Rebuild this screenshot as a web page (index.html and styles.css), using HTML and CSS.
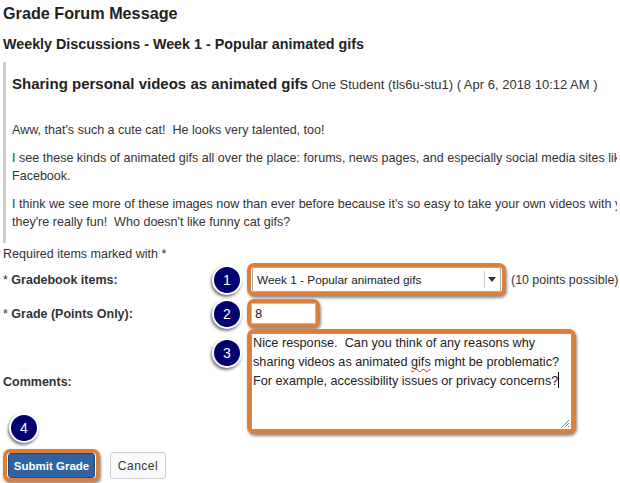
FILE: index.html
```html
<!DOCTYPE html>
<html>
<head>
<meta charset="utf-8">
<link rel="stylesheet" href="styles.css">
</head>
<body>
<h1 class="title">Grade Forum Message</h1>
<h2 class="topic">Weekly Discussions - Week 1 - Popular animated gifs</h2>
<div class="message">
  <div class="msg-head"><span class="msg-title">Sharing personal videos as animated gifs</span> <span class="msg-meta">One Student (tls6u-stu1) ( Apr 6, 2018 10:12 AM )</span></div>
  <p>Aww, that's such a cute cat!&nbsp; He looks very talented, too!</p>
  <p>I see these kinds of animated gifs all over the place: forums, news pages, and especially social media sites like<br>Facebook.</p>
  <p>I think we see more of these images now than ever before because it's so easy to take your own videos with your phone, and<br>they're really fun!&nbsp; Who doesn't like funny cat gifs?</p>
</div>
<div class="required">Required items marked with *</div>
<div class="form">
  <div class="row">
    <div class="label"><span class="star">*</span> Gradebook items:</div>
    <div class="field">
      <span class="badge">1</span>
      <div class="hl hl-select">
        <div class="select"><span class="select-text">Week 1 - Popular animated gifs</span><span class="select-arrow"></span></div>
      </div>
      <span class="possible">(10 points possible)</span>
    </div>
  </div>
  <div class="row row-grade">
    <div class="label"><span class="star">*</span> Grade (Points Only):</div>
    <div class="field">
      <span class="badge">2</span>
      <div class="hl hl-input">
        <div class="input">8</div>
      </div>
    </div>
  </div>
  <div class="row row-comments">
    <div class="label">Comments:</div>
    <div class="field">
      <span class="badge badge-top">3</span>
      <div class="hl hl-textarea">
        <div class="textarea">Nice response.&nbsp; Can you think of any reasons why<br>sharing videos as animated <span class="spell">gifs</span> might be problematic?<br>For example, accessibility issues or privacy concerns?<span class="caret"></span>
          <svg class="grip" width="10" height="10" viewBox="0 0 10 10"><path d="M9 2 L2 9 M9 5 L5 9 M9 8 L8 9" stroke="#888" stroke-width="1" fill="none"/></svg>
        </div>
      </div>
    </div>
  </div>
</div>
<div class="actions">
  <span class="badge badge-submit">4</span>
  <div class="hl hl-button"><button class="btn-submit">Submit Grade</button></div>
  <button class="btn-cancel">Cancel</button>
</div>
</body>
</html>
```
FILE: styles.css
```css
html, body {
  margin: 0;
  padding: 0;
  background: #fff;
  overflow: hidden;
}
body {
  padding: 0 3px;
  width: 614px;
  height: 483px;
  font-family: "Liberation Sans", Arial, sans-serif;
  color: #333;
  font-size: 12.5px;
}
.title {
  margin: 0;
  padding-top: 3px;
  font-size: 16.2px;
  line-height: 20px;
  font-weight: bold;
  color: #222;
}
.topic {
  margin: 12px 0 0;
  font-size: 14.3px;
  line-height: 18px;
  font-weight: bold;
  color: #222;
}
.message {
  margin-top: 9px;
  border-left: 3px solid #ccc;
  padding: 12px 0 12px 6px;
  white-space: nowrap;
  overflow: hidden;
}
.msg-head {
  line-height: 20px;
}
.msg-title {
  font-size: 15px;
  font-weight: bold;
  color: #222;
}
.msg-meta {
  font-size: 13px;
  color: #333;
}
.message p {
  margin: 10px 0 0;
  line-height: 18px;
  font-size: 12.55px;
}
.message p:first-of-type {
  margin-top: 26px;
}
.required {
  margin-top: 4px;
  line-height: 14px;
  color: #333;
}
.form {
  margin-top: 2px;
}
.row {
  display: flex;
  align-items: center;
}
.row-grade {
  margin-top: 3px;
}
.row-comments {
  margin-top: 1px;
}
.label {
  width: 244px;
  flex: none;
  font-weight: bold;
  color: #333;
}
.star {
  font-weight: normal;
}
.field {
  position: relative;
  display: flex;
  align-items: center;
}
.badge {
  position: absolute;
  left: -35px;
  top: 50%;
  margin-top: -15px;
  width: 26px;
  height: 26px;
  border: 2px solid #fff;
  border-radius: 50%;
  background: #00006f;
  color: #fff;
  font-size: 14px;
  line-height: 26px;
  text-align: center;
  box-shadow: -1px 2px 3px rgba(0, 0, 0, 0.55);
  z-index: 2;
}
.badge-top {
  top: 9px;
  margin-top: 0;
}
.hl {
  border: 4px solid #dd7e3b;
  border-radius: 7px;
  box-shadow: 1px 2px 3px rgba(0, 0, 0, 0.45);
  background: #fff;
}
.hl-select {
  padding: 0 1px;
}
.select {
  width: 247px;
  height: 23px;
  border: 1px solid #aaa;
  border-radius: 2px;
  display: flex;
  align-items: center;
  position: relative;
}
.select-text {
  padding-left: 4px;
  font-size: 11.8px;
  color: #222;
}
.select-arrow {
  position: absolute;
  right: 0;
  top: 3px;
  bottom: 3px;
  width: 15px;
  border-left: 1px solid #ccc;
}
.select-arrow::after {
  content: "";
  position: absolute;
  left: 3px;
  top: 6px;
  border-left: 4px solid transparent;
  border-right: 4px solid transparent;
  border-top: 5px solid #333;
}
.possible {
  margin-left: 5px;
  font-size: 12.4px;
  color: #333;
  white-space: nowrap;
}
.hl-input {
  padding: 0;
}
.input {
  width: 60px;
  height: 19px;
  border: 1px solid #bbb;
  padding-left: 3px;
  line-height: 19px;
  font-size: 13px;
  color: #222;
}
.hl-textarea {
  padding: 0;
}
.textarea {
  position: relative;
  width: 318px;
  height: 95px;
  border: 1px solid #999;
  padding: 0 0 0 1px;
  font-size: 12.7px;
  line-height: 19.2px;
  color: #222;
  white-space: nowrap;
}
.spell {
  text-decoration: underline wavy #e02020;
  text-decoration-thickness: 1px;
  text-underline-offset: 2px;
}
.caret {
  display: inline-block;
  width: 1px;
  height: 16px;
  background: #000;
  vertical-align: -3px;
}
.grip {
  position: absolute;
  right: 1px;
  bottom: 1px;
}
.actions {
  position: relative;
  margin-top: 15px;
  display: flex;
  align-items: center;
}
.badge-submit {
  left: 6px;
  top: -36px;
  margin-top: 0;
}
.hl-button {
  padding: 0 1px;
  border-radius: 7px;
}
.btn-submit {
  display: block;
  width: 87px;
  height: 25px;
  margin: 0;
  padding: 0;
  border: 1px solid #234a80;
  border-radius: 3px;
  background: #3163a2;
  color: #fff;
  font-family: "Liberation Sans", Arial, sans-serif;
  font-size: 11.5px;
  font-weight: bold;
}
.btn-cancel {
  margin: 0 0 0 10px;
  width: 56px;
  height: 27px;
  padding: 0;
  border: 1px solid #ccc;
  border-radius: 3px;
  background: #fafafa;
  color: #333;
  font-family: "Liberation Sans", Arial, sans-serif;
  font-size: 12px;
  letter-spacing: 0.5px;
}
```
